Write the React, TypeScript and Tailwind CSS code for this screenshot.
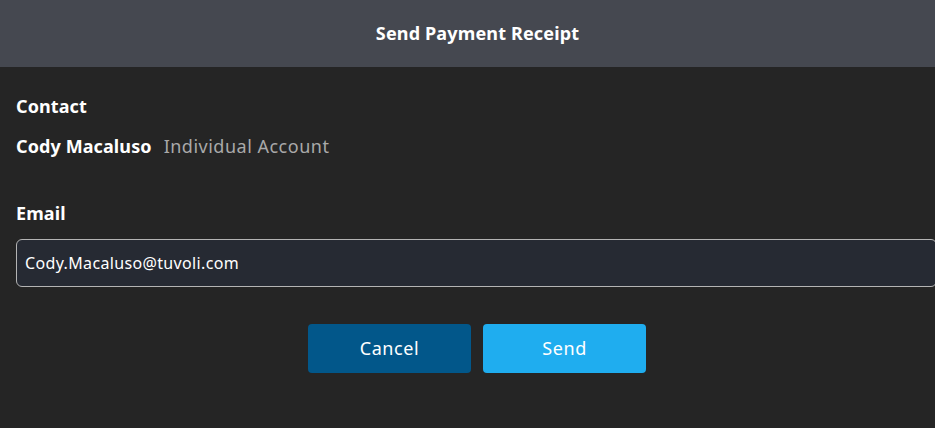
const font = { fontFamily: '"Noto Sans", Lato, sans-serif' };

export default function App() {
  return (
    <div className="w-[935px] h-[428px] overflow-hidden bg-[#252525] text-white" style={font}>
      {/* header */}
      <div className="h-[67px] bg-[#454850] flex items-center justify-center pl-[20px]">
        <h1 className="text-[18px] font-bold tracking-[0.15px]">Send Payment Receipt</h1>
      </div>

      <div className="pl-4 pt-[26px]">
        <div className="text-[18px] font-bold leading-[26px] tracking-[0.1px]">Contact</div>
        <div className="mt-[14px] flex items-baseline gap-3 leading-[26px]">
          <span className="text-[18px] font-bold tracking-[0.1px]">Cody Macaluso</span>
          <span className="text-[18px] text-[#a9a9a9] tracking-[0.5px]">Individual Account</span>
        </div>

        <div className="mt-[41px] text-[18px] font-bold leading-[26px] tracking-[0.1px]">Email</div>
        <div className="mt-[13px] w-[921px] h-[48px] rounded-md border border-[#b4b4b4] bg-[#262a33] flex items-center px-[8px]">
          <span className="text-[16px] text-white tracking-[0.35px]">Cody.Macaluso@tuvoli.com</span>
        </div>

        <div className="mt-[37px] flex gap-3 pl-[292px]">
          <button className="w-[163px] h-[49px] rounded-[4px] bg-[#02578a] text-[18px] text-white tracking-[0.6px]">Cancel</button>
          <button className="w-[163px] h-[49px] rounded-[4px] bg-[#1fadef] text-[18px] text-white tracking-[0.6px]">Send</button>
        </div>
      </div>
    </div>
  );
}
